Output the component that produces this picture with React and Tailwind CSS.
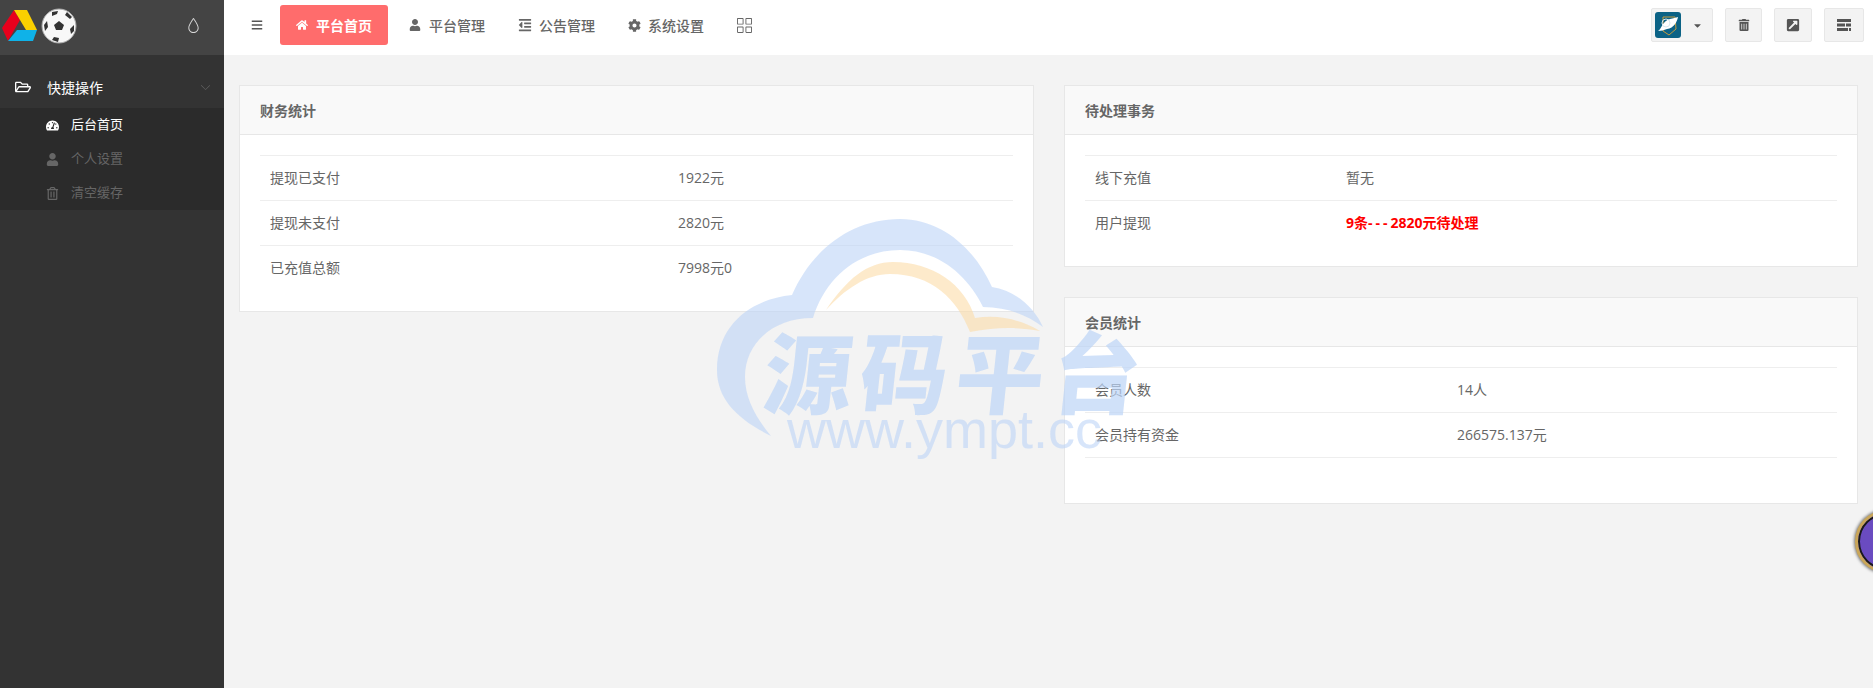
import React from 'react';
import { FaBars, FaHome, FaUser, FaCog, FaOutdent, FaTachometerAlt, FaRegFolderOpen, FaTrashAlt, FaRegTrashAlt, FaExternalLinkSquareAlt, FaCaretDown } from 'react-icons/fa';
import { SlDrop, SlGrid, SlArrowDown } from 'react-icons/sl';

const Logo = () => (
  <svg width="78" height="46" viewBox="0 2 78 46" className="shrink-0">
    <polygon points="13,10 19,20 7,41 1,28" fill="#e8001c" />
    <polygon points="13,10 26,10 36,30 25,30" fill="#fbd000" />
    <polygon points="7,41 16,30 36,30 32,41" fill="#0fb2e8" />
    <circle cx="58" cy="26" r="17" fill="#f8f8f8" stroke="#aaa" strokeWidth="1" />
    <polygon points="58,21 63,25 61,30 55,30 53,25" fill="#333" />
    <polygon points="51,12 57,11 56,14 51,16" fill="#333" />
    <polygon points="66,12 71,17 69,19 64,15" fill="#333" />
    <polygon points="43,25 46,21 47,27 44,31" fill="#333" />
    <polygon points="73,25 73,31 70,34 69,29" fill="#333" />
    <polygon points="53,37 58,38 57,42 51,40" fill="#333" />
  </svg>
);

const Avatar = () => (
  <svg width="26" height="26" viewBox="0 0 26 26" className="rounded-[3px]">
    <rect width="26" height="26" fill="#0b6285" />
    <path d="M8 5 L20 5 L21 17 L14 23 L8 19 Z" fill="none" stroke="#c59a3d" strokeWidth="1" />
    <path d="M3 19 C7 17 7 9 15 7 C18 6 21 6 23 5 C22 10 19 16 12 17 C9 18 6 19 3 19 Z" fill="#fff" />
    <circle cx="11" cy="11" r="4" fill="none" stroke="#d8e8ee" strokeWidth="1" />
  </svg>
);

const Watermark = () => (
  <div className="absolute left-[717px] top-[219px] w-[440px] h-[245px] pointer-events-none">
    <svg width="440" height="245" viewBox="0 0 440 245" className="absolute left-0 top-0">
      <path d="M54 217 C20 200 0 180 0 151 C0 105 35 80 75 76 C95 30 135 0 183 0 C225 0 258 30 275 68 C300 72 318 90 326 108 C310 96 290 88 266 88 C250 55 220 31 183 31 C140 31 108 60 96 99 C55 99 28 125 28 158 C28 180 40 200 54 217 Z" fill="#bcd4f6" fillOpacity="0.6" />
      <path d="M109 91 C130 60 150 43 176 43 C215 43 248 65 258 99 C285 95 305 102 323 112 C300 108 280 108 253 113 C240 80 215 55 173 55 C150 55 128 70 109 91 Z" fill="#fbdca8" fillOpacity="0.6" />
    </svg>
    <div className="absolute left-[48px] top-[104px] w-[395px] text-[88px] leading-[92px] font-black -skew-x-6 tracking-[8px] whitespace-nowrap text-[#bcd4f6]/70 font-['Noto_Sans_CJK_SC',sans-serif]">
      源码平台
    </div>
    <div className="absolute left-[70px] top-[182px] text-[54px] leading-[56px] whitespace-nowrap text-[#bcd4f6]/60 font-['Liberation_Sans',sans-serif]">
      www.ympt.cc
    </div>
  </div>
);

const NavItem = ({ icon: Icon, label, iconClass = 'text-[12px]', gap = 'gap-[8px]' }) => (
  <div className={`flex items-center ${gap} text-[14px] font-medium text-[#666]`}>
    <Icon className={iconClass} />
    <span>{label}</span>
  </div>
);

const TopButton = ({ children, className = '' }) => (
  <div className={`h-[34px] flex items-center justify-center bg-[#f3f3f3] border border-[#e7e7e7] rounded-[2px] text-[#555] ${className}`}>
    {children}
  </div>
);

const SubItem = ({ icon: Icon, label, active }) => (
  <div className={`h-[34px] flex items-center text-[13px] ${active ? 'text-white' : 'text-[#666]'}`}>
    <span className="w-[71px] pl-[46px] shrink-0">
      <Icon className="text-[13px]" />
    </span>
    <span>{label}</span>
  </div>
);

const Row = ({ label, value, col, valueClass = '', last }) => (
  <div className={`flex items-center pb-[2px] border-t border-[#eee] text-[14px] text-[#666] ${last ? 'border-b h-[46px]' : 'h-[45px]'}`}>
    <div className={`${col} pl-[10px] shrink-0`}>{label}</div>
    <div className={`pl-[10px] ${valueClass}`}>{value}</div>
  </div>
);

const Panel = ({ title, children, className = '' }) => (
  <div className={`bg-white border border-[#e7e7e7] ${className}`}>
    <div className="h-[49px] px-[20px] flex items-center bg-[#f9f9f9] border-b border-[#e7e7e7] text-[14px] font-bold text-[#666]">
      {title}
    </div>
    <div className="px-[20px] pt-[20px]">{children}</div>
  </div>
);

export default function App() {
  return (
    <div className="relative h-screen w-full overflow-hidden flex bg-[#f3f3f3] font-['Open_Sans','Noto_Sans_CJK_SC',sans-serif]">
      {/* Sidebar */}
      <aside className="w-[224px] shrink-0 bg-[#333] flex flex-col">
        <div className="h-[55px] pb-[5px] bg-[#444] flex items-center justify-between pl-[1px] pr-[23px]">
          <Logo />
          <SlDrop className="text-[15px] text-[#d8d8d8]" />
        </div>
        <div className="mt-[11px] h-[42px] flex items-center text-[14px] text-white">
          <span className="w-[47px] pl-[15px] shrink-0">
            <FaRegFolderOpen className="text-[16px]" />
          </span>
          <span className="flex-1">快捷操作</span>
          <SlArrowDown className="text-[9px] text-[#666] mr-[14px]" />
        </div>
        <div className="bg-[#2b2b2b]">
          <SubItem icon={FaTachometerAlt} label="后台首页" active />
          <SubItem icon={FaUser} label="个人设置" />
          <SubItem icon={FaRegTrashAlt} label="清空缓存" />
        </div>
      </aside>

      {/* Main */}
      <div className="flex-1 flex flex-col min-w-0">
        <header className="h-[55px] pb-[5px] bg-white flex items-center pl-[27px] pr-[9px]">
          <FaBars className="text-[12px] text-[#555] mr-[17px]" />
          <div className="h-[40px] w-[108px] bg-[#ff6c6c] rounded-[3px] flex items-center justify-center gap-[8px] text-[14px] font-bold text-white mr-[21px]">
            <FaHome className="text-[12px]" />
            <span>平台首页</span>
          </div>
          <div className="flex items-center gap-[33px]">
            <NavItem icon={FaUser} label="平台管理" />
            <NavItem icon={FaOutdent} iconClass="text-[14px]" gap="gap-[7px]" label="公告管理" />
            <NavItem icon={FaCog} iconClass="text-[13px]" gap="gap-[7px]" label="系统设置" />
            <SlGrid className="text-[15px] text-[#666]" />
          </div>
          <div className="ml-auto flex items-center gap-[12px]">
            <TopButton className="w-[62px] gap-[11px] justify-start pl-[3px]">
              <Avatar />
              <FaCaretDown className="text-[11px]" />
            </TopButton>
            <TopButton className="w-[37px]"><FaTrashAlt className="text-[12px]" /></TopButton>
            <TopButton className="w-[38px]"><FaExternalLinkSquareAlt className="text-[14px]" /></TopButton>
            <TopButton className="w-[40px]">
              <svg width="14" height="12" viewBox="0 0 14 12" fill="#555">
                <path d="M0 0H14V3H0Z M0 4.5H8V7.5H0Z M9 4.5H14V7.5H9Z M0 9H11V12H0Z M12 9H14V12H12Z" />
              </svg>
            </TopButton>
          </div>
        </header>

        <main className="flex-1 pt-[30px] px-[15px] flex items-start gap-[30px]">
          <Panel title="财务统计" className="w-[795px] pb-[21px]">
            <Row label="提现已支付" value="1922元" col="w-[408px]" />
            <Row label="提现未支付" value="2820元" col="w-[408px]" />
            <Row label="已充值总额" value="7998元0" col="w-[408px]" />
          </Panel>
          <div className="flex-1 flex flex-col gap-[30px]">
            <Panel title="待处理事务" className="pb-[21px]">
              <Row label="线下充值" value="暂无" col="w-[251px]" />
              <Row
                label="用户提现"
                value={<>9条<span className="tracking-[3px]">---</span>2820元待处理</>}
                col="w-[251px]"
                valueClass="font-bold text-[#f00]"
              />
            </Panel>
            <Panel title="会员统计" className="pb-[45px]">
              <Row label="会员人数" value="14人" col="w-[362px]" />
              <Row label="会员持有资金" value="266575.137元" col="w-[362px]" last />
            </Panel>
          </div>
        </main>
      </div>

      <Watermark />

      {/* floating ball at the page edge */}
      <div className="absolute left-[1855px] top-[510px] w-[63px] h-[63px] rounded-full border-[3px] border-[#c9a659] bg-[#6a4bc0] shadow-[0_0_3px_1px_rgba(0,0,0,0.5),inset_0_0_0_2px_#1a1a1a]" />
    </div>
  );
}
